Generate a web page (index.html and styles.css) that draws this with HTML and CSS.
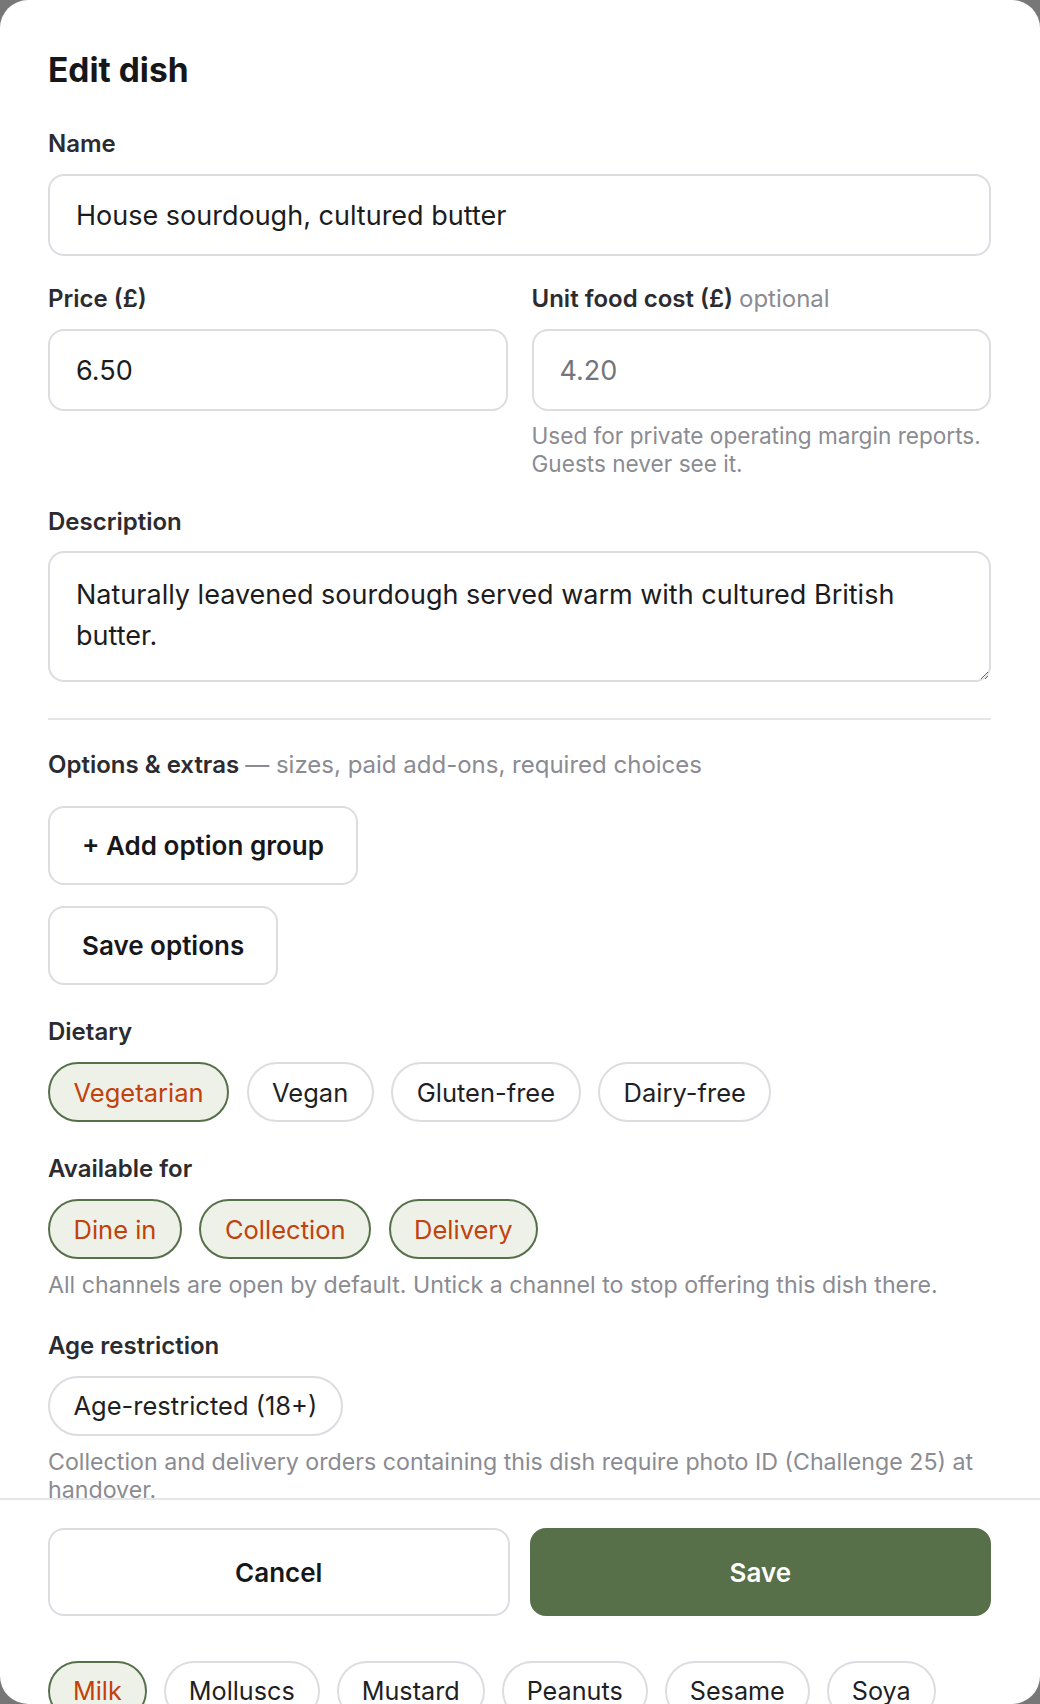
FILE: index.html
```html
<!DOCTYPE html>
<html lang="en">
<head>
<meta charset="utf-8">
<title>Edit dish</title>
<link rel="stylesheet" href="styles.css">
</head>
<body>
<div class="modal">
  <div class="sheet-body">
    <h1 class="title">Edit dish</h1>

    <div class="field field-name">
      <label class="label" for="name">Name</label>
      <input class="input" id="name" type="text" value="House sourdough, cultured butter">
    </div>

    <div class="row">
      <div class="field">
        <label class="label" for="price">Price (£)</label>
        <input class="input" id="price" type="text" value="6.50">
      </div>
      <div class="field">
        <label class="label" for="cost">Unit food cost (£) <span class="optional">optional</span></label>
        <input class="input" id="cost" type="text" placeholder="4.20">
        <p class="help help-cost">Used for private operating margin reports. Guests never see it.</p>
      </div>
    </div>

    <div class="field field-desc">
      <label class="label" for="desc">Description</label>
      <textarea class="textarea" id="desc">Naturally leavened sourdough served warm with cultured British butter.</textarea>
    </div>

    <hr class="divider">

    <p class="section-label">Options &amp; extras <span class="muted">— sizes, paid add-ons, required choices</span></p>
    <button class="btn-outline btn-add" type="button">+ Add option group</button>
    <button class="btn-outline btn-save-opts" type="button">Save options</button>

    <p class="group-label">Dietary</p>
    <div class="chips">
      <span class="chip is-on">Vegetarian</span>
      <span class="chip">Vegan</span>
      <span class="chip">Gluten-free</span>
      <span class="chip">Dairy-free</span>
    </div>

    <p class="group-label">Available for</p>
    <div class="chips">
      <span class="chip is-on">Dine in</span>
      <span class="chip is-on">Collection</span>
      <span class="chip is-on">Delivery</span>
    </div>
    <p class="help help-channels">All channels are open by default. Untick a channel to stop offering this dish there.</p>

    <p class="group-label">Age restriction</p>
    <div class="chips">
      <span class="chip">Age-restricted (18+)</span>
    </div>
    <p class="help help-age">Collection and delivery orders containing this dish require photo ID (Challenge 25) at handover.</p>
  </div>

  <div class="sheet-footer">
    <button class="btn-cancel" type="button">Cancel</button>
    <button class="btn-primary" type="button">Save</button>
  </div>

  <div class="chips allergens">
    <span class="chip is-on">Milk</span>
    <span class="chip">Molluscs</span>
    <span class="chip">Mustard</span>
    <span class="chip">Peanuts</span>
    <span class="chip">Sesame</span>
    <span class="chip">Soya</span>
  </div>
</div>
</body>
</html>
```
FILE: styles.css
```css
* { box-sizing: border-box; }

html, body {
  margin: 0;
  padding: 0;
  height: 1704px;
  overflow: hidden;
}

body {
  background: #777777;
  font-family: "Inter", "Noto Sans", sans-serif;
  color: #1c1c20;
}

.modal {
  width: 1040px;
  height: 1704px;
  background: #ffffff;
  border-radius: 28px;
  overflow: hidden;
  display: flex;
  flex-direction: column;
}

.sheet-body {
  height: 1498px;
  flex: none;
  overflow: hidden;
  padding: 50px 49px 0 48px;
}

.title {
  margin: 0;
  font-size: 33.5px;
  line-height: 40px;
  font-weight: 700;
  color: #17171a;
}

.field { display: flex; flex-direction: column; }
.field-name { margin-top: 38px; }

.label {
  font-size: 24px;
  line-height: 32px;
  font-weight: 600;
  color: #2b2b30;
  margin-bottom: 14px;
}

.optional {
  font-weight: 400;
  color: #8b8b92;
}

.input {
  height: 82px;
  border: 2px solid #dcdce1;
  border-radius: 16px;
  padding: 0 26px;
  font-family: inherit;
  font-size: 27px;
  color: #1c1c20;
  background: #fff;
  outline: none;
  width: 100%;
}

.input::placeholder { color: #75757b; opacity: 1; }

.row {
  display: grid;
  grid-template-columns: 1fr 1fr;
  column-gap: 24px;
  margin-top: 27px;
}

.help {
  margin: 0;
  font-size: 23.2px;
  line-height: 28px;
  color: #8b8b92;
}

.help-cost {
  margin-top: 11px;
  font-size: 22.6px;
}

.field-desc { margin-top: 28px; }
.field-desc .label { margin-bottom: 13px; }

.textarea {
  height: 131px;
  width: 100%;
  border: 2px solid #dcdce1;
  border-radius: 16px;
  padding: 21px 26px 20px;
  font-family: inherit;
  font-size: 27px;
  line-height: 41px;
  color: #1c1c20;
  resize: vertical;
  outline: none;
}

.divider {
  margin: 36px 0 0;
  border: 0;
  height: 2px;
  background: #e6e6ea;
}

.section-label {
  margin: 29px 0 0;
  font-size: 24px;
  line-height: 32px;
  font-weight: 600;
  color: #2b2b30;
}

.muted {
  font-weight: 400;
  color: #8b8b92;
}

.btn-outline {
  display: block;
  height: 79px;
  padding: 0 32px;
  border: 2px solid #dcdce1;
  border-radius: 16px;
  background: #fff;
  font-family: inherit;
  font-size: 26px;
  font-weight: 600;
  color: #17171a;
}

.btn-add { margin-top: 25px; }
.btn-save-opts { margin-top: 21px; }

.group-label {
  margin: 31px 0 14px;
  font-size: 24px;
  line-height: 32px;
  font-weight: 600;
  color: #2b2b30;
}

.chips {
  display: flex;
  flex-wrap: wrap;
  gap: 17.5px;
}

.chip {
  display: inline-flex;
  align-items: center;
  height: 60px;
  padding: 0 23.5px;
  border: 2px solid #dcdce1;
  border-radius: 999px;
  background: #fff;
  font-size: 25.5px;
  color: #1f1f24;
  white-space: nowrap;
}

.chip.is-on {
  background: #eef1e7;
  border-color: #56704a;
  color: #c2410c;
}

.help-channels { margin-top: 11.5px; }
.help-age { margin-top: 12px; }

.sheet-footer {
  flex: none;
  border-top: 2px solid #e6e6ea;
  padding: 28px 49px 0 48px;
  display: grid;
  grid-template-columns: 1fr 1fr;
  column-gap: 20px;
}

.btn-cancel,
.btn-primary {
  height: 88px;
  border-radius: 16px;
  font-family: inherit;
  font-size: 26px;
  font-weight: 600;
}

.btn-cancel {
  background: #fff;
  border: 2px solid #dcdce1;
  color: #17171a;
}

.btn-primary {
  background: #57704a;
  border: 2px solid #57704a;
  color: #ffffff;
}

.allergens {
  flex: none;
  flex-wrap: nowrap;
  gap: 17px;
  margin-top: 45px;
  padding: 0 49px 0 48px;
}

.allergens .chip {
  padding: 0 23px;
  font-size: 25.2px;
}
```
